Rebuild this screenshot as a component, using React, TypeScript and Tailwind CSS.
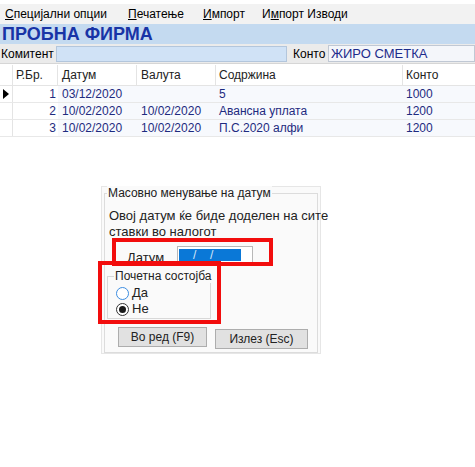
import React from 'react';

const rows = [
  { no: 1, datum: '03/12/2020', valuta: '', sodrzina: '5', konto: '1000', current: true },
  { no: 2, datum: '10/02/2020', valuta: '10/02/2020', sodrzina: 'Авансна уплата', konto: '1200' },
  { no: 3, datum: '10/02/2020', valuta: '10/02/2020', sodrzina: 'П.С.2020 алфи', konto: '1200' },
];

function Radio({ checked, label }: { checked?: boolean; label: string }) {
  return (
    <div className="flex items-center h-[16px]">
      <span
        className={
          'flex items-center justify-center w-[13px] h-[13px] rounded-full border bg-white ' +
          (checked ? 'border-[#333333]' : 'border-[#3c8de0]')
        }
      >
        {checked && <span className="w-[7px] h-[7px] rounded-full bg-[#1a1a1a]" />}
      </span>
      <span className="ml-[3px] text-[13px]">{label}</span>
    </div>
  );
}

export default function App() {
  return (
    <div
      className="relative w-[475px] h-[467px] bg-white text-[12px] text-black overflow-hidden"
      style={{ fontFamily: '"Liberation Sans", Arial, sans-serif' }}
    >
      {/* Menu */}
      <div className="mt-[4px] h-[20px] bg-[#f2f2f2] flex items-center pl-[5px] whitespace-nowrap">
        <span className="w-[123px]"><u>С</u>пецијални опции</span>
        <span className="w-[75px]"><u>П</u>ечатење</span>
        <span className="w-[59px]"><u>И</u>мпорт</span>
        <span>И<u>м</u>порт Изводи</span>
      </div>

      {/* Firm title */}
      <div className="h-[20px] bg-[#c4daf0] flex items-center pl-[2px]">
        <span className="font-bold text-[18px] leading-none text-[#1834a6]">ПРОБНА ФИРМА</span>
      </div>

      {/* Komitent / Konto */}
      <div className="h-[20px] bg-[#ebebeb] flex items-center border-b border-[#d6d6d6]">
        <span className="ml-[1px] w-[55px]">Комитент</span>
        <div className="w-[231px] h-[16px] bg-[#d0e2f6] border border-[#b3c6dc]" />
        <span className="ml-[6px] w-[35px]">Конто</span>
        <div className="flex-1 h-[17px] bg-[#f4f6fa] border border-[#c0c8d4] flex items-center pl-[2px] text-[13px] text-[#1d2c8c]">
          ЖИРО СМЕТКА
        </div>
      </div>

      {/* Grid */}
      <div className="mt-[1px]">
        <div className="flex h-[21px] items-center border-b border-[#e4e4e4] text-[#222222]">
          <div className="w-[13px] h-full border-r border-[#e4e4e4]" />
          <div className="w-[45px] h-full pl-[3px] flex items-center border-r border-[#e4e4e4]">Р.Бр.</div>
          <div className="w-[79px] h-full pl-[4px] flex items-center border-r border-[#e4e4e4]">Датум</div>
          <div className="w-[79px] h-full pl-[4px] flex items-center border-r border-[#e4e4e4]">Валута</div>
          <div className="w-[187px] h-full pl-[3px] flex items-center border-r border-[#e4e4e4]">Содржина</div>
          <div className="flex-1 h-full pl-[3px] flex items-center">Конто</div>
        </div>
        {rows.map((r) => (
          <div key={r.no} className="flex h-[17px] border-b border-[#e8e8e8] text-[#1e2b80]">
            <div className="w-[13px] h-full border-r border-[#e4e4e4] flex items-center justify-center">
              {r.current && (
                <svg width="6" height="10" viewBox="0 0 6 10">
                  <path d="M0 0 L6 5 L0 10 Z" fill="#000" />
                </svg>
              )}
            </div>
            <div className="w-[45px] h-full pr-[2px] flex items-center justify-end">{r.no}</div>
            <div className="w-[79px] h-full pl-[4px] flex items-center bg-[#f7f9fd]">{r.datum}</div>
            <div className="w-[79px] h-full pl-[4px] flex items-center bg-[#f7f9fd]">{r.valuta}</div>
            <div className="w-[187px] h-full pl-[3px] flex items-center bg-[#f7f9fd]">{r.sodrzina}</div>
            <div className="flex-1 h-full pl-[3px] flex items-center bg-[#f7f9fd]">{r.konto}</div>
          </div>
        ))}
      </div>

      {/* Dialog */}
      <div className="absolute left-[101px] top-[186px] w-[220px] h-[168px] bg-[#fafafa] border border-[#e6e6e6] text-[#222]">
        <div className="relative mt-[6px] mx-[2px] h-[160px] border border-[#dcdcdc]">
          <span className="absolute -top-[8px] left-[2px] bg-[#fafafa] px-[1px] leading-[14px] whitespace-nowrap">
            Масовно менување на датум
          </span>
          <div className="pt-[14px] pl-[4px] leading-[16px] text-[13px] whitespace-nowrap">
            Овој датум ќе биде доделен на сите
            <br />
            ставки во налогот
          </div>
          <div className="flex items-start mt-[6px] ml-[22px] h-[20px]">
            <span className="mt-[4px] w-[50px] text-[13px] leading-[15px]">Датум</span>
            <div className="w-[76px] h-[20px] bg-white border border-[#b8b8b8] flex items-start pt-[2px] pl-[1px]">
              <div className="relative w-[62px] h-[12px] bg-[#0a78d7]">
                <span className="absolute left-[14px] -top-[1px] text-[#d8e8f8] leading-[14px]">/</span>
                <span className="absolute left-[31px] -top-[1px] text-[#d8e8f8] leading-[14px]">/</span>
              </div>
            </div>
          </div>
          <div className="relative mt-[10px] ml-[2px] w-[104px] h-[43px] border border-[#d8d8d8]">
            <span className="absolute -top-[8px] left-[6px] bg-[#fafafa] px-[1px] leading-[14px] whitespace-nowrap">
              Почетна состојба
            </span>
            <div className="pt-[8px] pl-[8px] flex flex-col">
              <Radio label="Да" />
              <Radio checked label="Не" />
            </div>
          </div>
          <div className="flex items-start mt-[8px] ml-[13px]">
            <button className="w-[89px] h-[20px] bg-[#e1e1e1] border border-[#adadad] text-[12px]">
              Во ред (F9)
            </button>
            <button className="mt-[2px] ml-[8px] w-[93px] h-[20px] bg-[#e1e1e1] border border-[#adadad] text-[12px]">
              Излез (Esc)
            </button>
          </div>
        </div>
      </div>

      {/* Red annotation frames */}
      <div className="absolute left-[112px] top-[238px] w-[161px] h-[28px] border-[4px] border-[#f20d0d]" />
      <div className="absolute left-[98px] top-[261px] w-[123px] h-[63px] border-[4px] border-[#f20d0d]" />
    </div>
  );
}
